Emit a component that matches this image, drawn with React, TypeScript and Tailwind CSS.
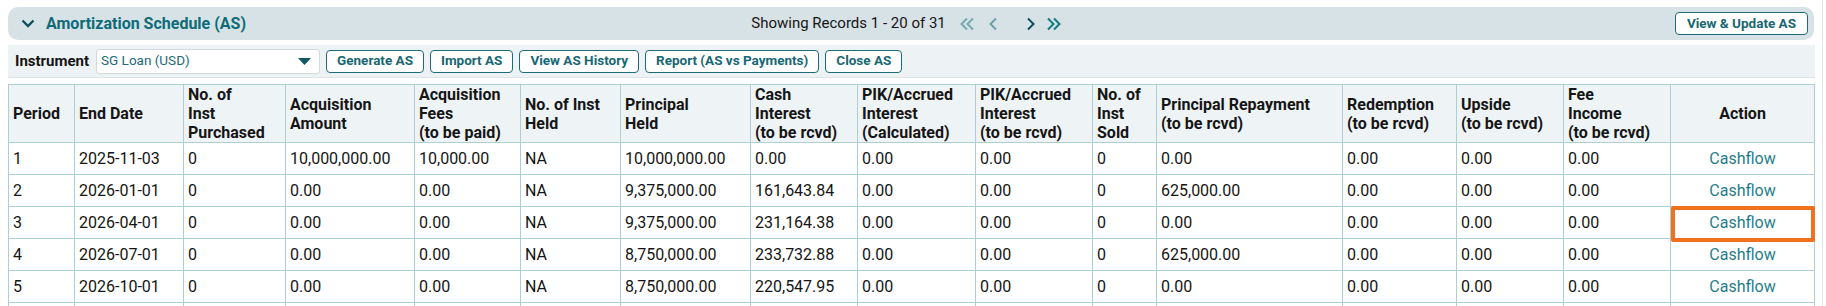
import React from "react";

const headers: React.ReactNode[] = [
  "Period",
  "End Date",
  <>No. of<br />Inst<br />Purchased</>,
  <>Acquisition<br />Amount</>,
  <>Acquisition<br />Fees<br />(to be paid)</>,
  <>No. of Inst<br />Held</>,
  <>Principal<br />Held</>,
  <>Cash<br />Interest<br />(to be rcvd)</>,
  <>PIK/Accrued<br />Interest<br />(Calculated)</>,
  <>PIK/Accrued<br />Interest<br />(to be rcvd)</>,
  <>No. of<br />Inst<br />Sold</>,
  <>Principal Repayment<br />(to be rcvd)</>,
  <>Redemption<br />(to be rcvd)</>,
  <>Upside<br />(to be rcvd)</>,
  <>Fee<br />Income<br />(to be rcvd)</>,
];

const rows: string[][] = [
  ["1", "2025-11-03", "0", "10,000,000.00", "10,000.00", "NA", "10,000,000.00", "0.00", "0.00", "0.00", "0", "0.00", "0.00", "0.00", "0.00"],
  ["2", "2026-01-01", "0", "0.00", "0.00", "NA", "9,375,000.00", "161,643.84", "0.00", "0.00", "0", "625,000.00", "0.00", "0.00", "0.00"],
  ["3", "2026-04-01", "0", "0.00", "0.00", "NA", "9,375,000.00", "231,164.38", "0.00", "0.00", "0", "0.00", "0.00", "0.00", "0.00"],
  ["4", "2026-07-01", "0", "0.00", "0.00", "NA", "8,750,000.00", "233,732.88", "0.00", "0.00", "0", "625,000.00", "0.00", "0.00", "0.00"],
  ["5", "2026-10-01", "0", "0.00", "0.00", "NA", "8,750,000.00", "220,547.95", "0.00", "0.00", "0", "0.00", "0.00", "0.00", "0.00"],
];

function DoubleLeft({ color }: { color: string }) {
  return (
    <svg width="16" height="16" viewBox="0 0 16 16" fill="none">
      <polyline points="8,2.5 2.5,8 8,13.5" stroke={color} strokeWidth="2" />
      <polyline points="14,2.5 8.5,8 14,13.5" stroke={color} strokeWidth="2" />
    </svg>
  );
}
function DoubleRight({ color }: { color: string }) {
  return (
    <svg width="16" height="16" viewBox="0 0 16 16" fill="none">
      <polyline points="2,2.5 7.5,8 2,13.5" stroke={color} strokeWidth="2" />
      <polyline points="8,2.5 13.5,8 8,13.5" stroke={color} strokeWidth="2" />
    </svg>
  );
}
function Single({ color, dir }: { color: string; dir: "l" | "r" }) {
  return (
    <svg width="10" height="16" viewBox="0 0 10 16" fill="none">
      <polyline
        points={dir === "l" ? "8,2.5 2.5,8 8,13.5" : "2,2.5 7.5,8 2,13.5"}
        stroke={color}
        strokeWidth="2"
      />
    </svg>
  );
}

function Btn({ children }: { children: React.ReactNode }) {
  return (
    <button className="h-[23px] px-[10px] rounded-[4px] border-[1.5px] border-[#1b6c76] bg-white text-[13.5px] font-bold leading-none text-[#176873] whitespace-nowrap">
      {children}
    </button>
  );
}

export default function App() {
  return (
    <div className="w-[1826px] h-[306px] overflow-hidden bg-white font-['Roboto',sans-serif] text-[#151515]">
      <div className="w-[1823px] h-[306px] border-r border-[#e4e7e9] pl-[8px] pr-[8px] pt-[7px]">
        {/* Title bar */}
        <div className="h-[33px] w-[1806px] rounded-[10px] bg-[#d7e2e7] grid grid-cols-[1fr_auto_1fr] items-center">
          <div className="flex items-center pl-[13px]">
            <svg width="14" height="9" viewBox="0 0 14 9" fill="none">
              <polyline points="1.5,1.5 7,7 12.5,1.5" stroke="#0f4f60" strokeWidth="2.4" />
            </svg>
            <span className="ml-[11px] text-[16px] font-bold text-[#0e6b77] leading-none">
              Amortization Schedule (AS)
            </span>
          </div>
          <div className="flex items-center pr-[9px]">
            <span className="text-[15px] leading-none text-[#151515]">Showing Records 1 - 20 of 31</span>
            <span className="ml-[13px] flex items-center">
              <DoubleLeft color="#74a9b0" />
            </span>
            <span className="ml-[13px] flex items-center">
              <Single color="#6c9fa8" dir="l" />
            </span>
            <span className="ml-[28px] flex items-center">
              <Single color="#0f4c60" dir="r" />
            </span>
            <span className="ml-[10px] flex items-center">
              <DoubleRight color="#12797d" />
            </span>
          </div>
          <div className="flex justify-end pr-[6px]">
            <button className="h-[23px] px-[11px] rounded-[4px] border-[1.5px] border-[#1b6c76] bg-white text-[13.5px] font-bold leading-none text-[#176873]">
              View &amp; Update AS
            </button>
          </div>
        </div>

        {/* Toolbar */}
        <div className="mt-[5px] h-[33px] w-[1807px] bg-[#edf2f5] border-b border-[#dde3e6] flex items-center pl-[7px] gap-[6px]">
          <span className="text-[15px] font-bold leading-none text-[#151515] mr-[1px]">Instrument</span>
          <div className="h-[25px] w-[224px] rounded-[3px] border border-[#d3dade] bg-white flex items-center justify-between pl-[4px] pr-[8px]">
            <span className="text-[13.5px] text-[#1b6b7b] leading-none">SG Loan (USD)</span>
            <svg width="13" height="7" viewBox="0 0 13 7">
              <polygon points="0,0 13,0 6.5,7" fill="#0f5766" />
            </svg>
          </div>
          <Btn>Generate AS</Btn>
          <Btn>Import AS</Btn>
          <Btn>View AS History</Btn>
          <Btn>Report (AS vs Payments)</Btn>
          <Btn>Close AS</Btn>
        </div>

        {/* Table */}
        <table className="mt-[6px] w-[1806px] table-fixed border-collapse text-[16px]">
          <colgroup>
            <col className="w-[66px]" />
            <col className="w-[109px]" />
            <col className="w-[102px]" />
            <col className="w-[129px]" />
            <col className="w-[106px]" />
            <col className="w-[100px]" />
            <col className="w-[130px]" />
            <col className="w-[107px]" />
            <col className="w-[118px]" />
            <col className="w-[117px]" />
            <col className="w-[64px]" />
            <col className="w-[186px]" />
            <col className="w-[114px]" />
            <col className="w-[107px]" />
            <col className="w-[107px]" />
            <col className="w-[144px]" />
          </colgroup>
          <thead>
            <tr className="h-[57px] bg-[#eef3f5]">
              {headers.map((h, i) => (
                <th
                  key={i}
                  className="border border-[#abcfd4] px-[4px] text-left align-middle font-bold text-[16px] leading-[19px] text-[#151515]"
                >
                  {h}
                </th>
              ))}
              <th className="border border-[#abcfd4] px-[4px] text-center align-middle font-bold text-[16px] leading-[19px] text-[#151515]">
                Action
              </th>
            </tr>
          </thead>
          <tbody>
            {rows.map((r, ri) => (
              <tr key={ri} className="h-[32px]">
                {r.map((c, ci) => (
                  <td key={ci} className="border border-[#abcfd4] px-[4px] py-0 align-middle leading-[18px] whitespace-nowrap">
                    {c}
                  </td>
                ))}
                <td className="relative border border-[#abcfd4] px-[4px] py-0 text-center align-middle leading-[18px] text-[#1f7d8c]">
                  Cashflow
                  {ri === 2 && (
                    <div className="absolute -top-[1px] left-0 -right-[1px] -bottom-[4px] border-[4px] border-[#f0701e] rounded-[2px]" />
                  )}
                </td>
              </tr>
            ))}
            <tr className="h-[32px]">
              {Array.from({ length: 16 }).map((_, i) => (
                <td key={i} className="border border-[#abcfd4]" />
              ))}
            </tr>
          </tbody>
        </table>
      </div>
    </div>
  );
}
